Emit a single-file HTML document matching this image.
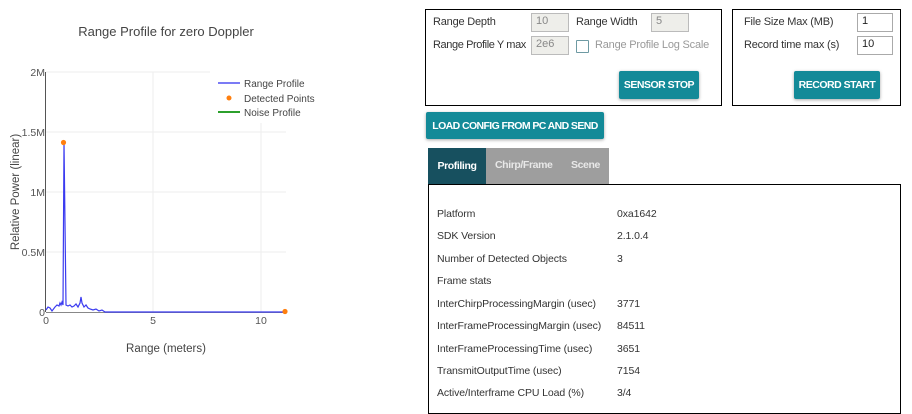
<!DOCTYPE html>
<html><head><meta charset="utf-8"><style>
*{box-sizing:border-box;margin:0;padding:0}
body{width:912px;height:402px;overflow:hidden;background:#fff;font-family:"Liberation Sans",Arial,sans-serif;position:relative;color:#333}
.a{position:absolute;white-space:nowrap}
.box{position:absolute;border:1px solid #000}
.lbl{font-size:11px;color:#333;letter-spacing:-0.2px}
.inp{position:absolute;border:1px solid #bbb;background:#eeeeea;font-size:11px;color:#888;padding:1px 4px;height:19px}
.inp2{position:absolute;border:1px solid #aaa;background:#fff;font-size:11px;color:#222;padding:1px 4px;height:19px}
.btn{position:absolute;background:#138a98;color:#fff;font-weight:bold;font-size:10.5px;letter-spacing:-0.5px;white-space:nowrap;display:flex;align-items:center;justify-content:center;border-radius:2px;box-shadow:0 1px 3px rgba(0,0,0,.35)}
.row{position:absolute;left:437px;font-size:10.5px;color:#333;white-space:nowrap;letter-spacing:-0.1px}
.val{position:absolute;left:617px;font-size:10.5px;color:#333;letter-spacing:-0.1px}
</style></head><body>
<svg class="a" style="left:0;top:0" width="320" height="402" font-family="Liberation Sans,Arial,sans-serif">
<text x="166" y="36" text-anchor="middle" font-size="13" fill="#444">Range Profile for zero Doppler</text>
<g stroke="#eee" stroke-width="1">
<line x1="46" y1="132" x2="286" y2="132"/><line x1="46" y1="192" x2="286" y2="192"/><line x1="46" y1="252" x2="286" y2="252"/>
<line x1="153" y1="72" x2="153" y2="312"/><line x1="261" y1="123" x2="261" y2="312"/><line x1="46" y1="72" x2="210" y2="72"/>
</g>
<line x1="45.5" y1="72" x2="45.5" y2="312" stroke="#555" stroke-width="1"/>
<line x1="46" y1="312.5" x2="286" y2="312.5" stroke="#888"/>
<g font-size="10.5" fill="#555" text-anchor="end">
<text x="45" y="76">2M</text><text x="45" y="136">1.5M</text><text x="45" y="196">1M</text><text x="45" y="256">0.5M</text><text x="45" y="316">0</text>
</g>
<g font-size="10.5" fill="#555" text-anchor="middle">
<text x="46" y="324">0</text><text x="153" y="324">5</text><text x="261" y="324">10</text>
</g>
<text x="166" y="352" text-anchor="middle" font-size="11.5" fill="#444">Range (meters)</text>
<text transform="translate(19,192) rotate(-90)" text-anchor="middle" font-size="11.5" fill="#444">Relative Power (linear)</text>
<polyline fill="none" stroke="#3b3bf0" stroke-width="1.2" points="46,310 48,307 50,308 52,311 55,307 57,305 59,306 60,303 61,305 62,302 63,305 64,142 66,305 68,306 70,305 72,307 74,306 76,304 78,307 80,303 81,297 82,303 84,307 86,305 88,308 90,309 93,310 96,309 99,311 102,310 105,312 140,312 286,312"/>
<circle cx="63.5" cy="142.5" r="2.6" fill="#ff7f0e"/>
<circle cx="285" cy="311.5" r="2.6" fill="#ff7f0e"/>
<g font-size="10" fill="#444">
<line x1="218" y1="83" x2="240" y2="83" stroke="#7b7bf5" stroke-width="2"/><text x="244" y="87">Range Profile</text>
<circle cx="229" cy="98" r="2.5" fill="#ff7f0e"/><text x="244" y="102">Detected Points</text>
<line x1="218" y1="112" x2="240" y2="112" stroke="#2ca02c" stroke-width="2"/><text x="244" y="116">Noise Profile</text>
</g>
</svg>

<div class="box" style="left:425px;top:9px;width:297px;height:97px"></div>
<div class="a lbl" style="left:433px;top:16px">Range Depth</div>
<div class="inp" style="left:531px;top:13px;width:38px">10</div>
<div class="a lbl" style="left:576px;top:16px">Range Width</div>
<div class="inp" style="left:651px;top:13px;width:38px">5</div>
<div class="a lbl" style="left:433px;top:39px;letter-spacing:-0.4px">Range Profile Y max</div>
<div class="inp" style="left:531px;top:36px;width:38px">2e6</div>
<div class="a" style="left:576px;top:40px;width:13px;height:13px;border:1.5px solid #6e9aa3;border-radius:1px"></div>
<div class="a lbl" style="left:595px;top:39px;color:#999;letter-spacing:-0.2px">Range Profile Log Scale</div>
<div class="btn" style="left:619px;top:71px;width:80px;height:28px">SENSOR STOP</div>

<div class="box" style="left:732px;top:9px;width:169px;height:97px"></div>
<div class="a lbl" style="left:744px;top:16px">File Size Max (MB)</div>
<div class="inp2" style="left:857px;top:13px;width:36px">1</div>
<div class="a lbl" style="left:744px;top:39px">Record time max (s)</div>
<div class="inp2" style="left:857px;top:36px;width:36px">10</div>
<div class="btn" style="left:794px;top:71px;width:86px;height:28px">RECORD START</div>

<div class="btn" style="left:426px;top:112px;width:178px;height:27px;letter-spacing:-0.6px">LOAD CONFIG FROM PC AND SEND</div>

<div class="a" style="left:428px;top:148px;width:58px;height:36px;background:#17505f;color:#fff;font-weight:bold;font-size:10.5px;display:flex;align-items:center;justify-content:center;letter-spacing:-0.4px">Profiling</div>
<div class="a" style="left:486px;top:148px;width:123px;height:36px;background:#9e9e9e"></div>
<div class="a" style="left:495px;top:159px;color:#e8e8e8;font-weight:bold;font-size:10.5px;letter-spacing:-0.4px">Chirp/Frame</div>
<div class="a" style="left:571px;top:159px;color:#e8e8e8;font-weight:bold;font-size:10.5px;letter-spacing:-0.4px">Scene</div>
<div class="box" style="left:428px;top:184px;width:473px;height:230px"></div>

<div class="row" style="top:208px">Platform</div><div class="val" style="top:208px">0xa1642</div>
<div class="row" style="top:230px">SDK Version</div><div class="val" style="top:230px">2.1.0.4</div>
<div class="row" style="top:253px">Number of Detected Objects</div><div class="val" style="top:253px">3</div>
<div class="row" style="top:275px">Frame stats</div>
<div class="row" style="top:298px">InterChirpProcessingMargin (usec)</div><div class="val" style="top:298px">3771</div>
<div class="row" style="top:320px">InterFrameProcessingMargin (usec)</div><div class="val" style="top:320px">84511</div>
<div class="row" style="top:343px">InterFrameProcessingTime (usec)</div><div class="val" style="top:343px">3651</div>
<div class="row" style="top:365px">TransmitOutputTime (usec)</div><div class="val" style="top:365px">7154</div>
<div class="row" style="top:387px">Active/Interframe CPU Load (%)</div><div class="val" style="top:387px">3/4</div>
</body></html>
